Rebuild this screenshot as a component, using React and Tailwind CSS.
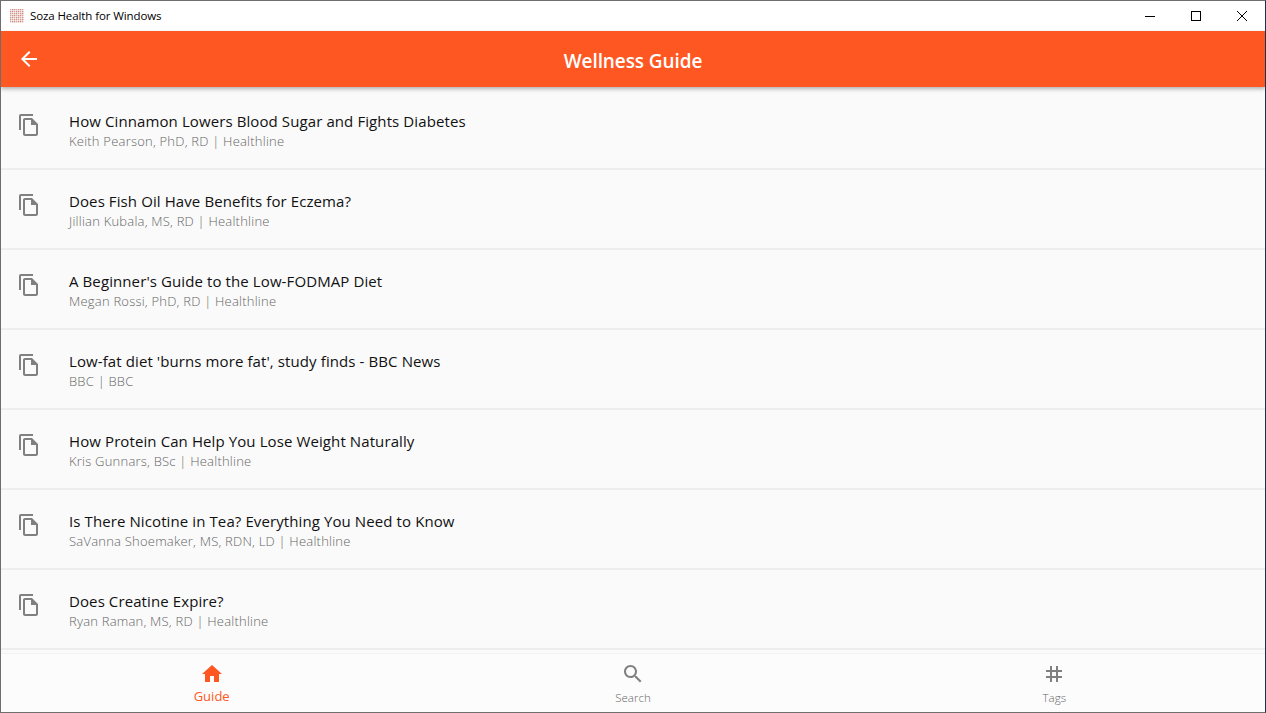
import React from "react";

const font = { fontFamily: '"Open Sans", "Noto Sans", sans-serif' };

const articles = [
  { title: "How Cinnamon Lowers Blood Sugar and Fights Diabetes", by: "Keith Pearson, PhD, RD | Healthline" },
  { title: "Does Fish Oil Have Benefits for Eczema?", by: "Jillian Kubala, MS, RD | Healthline" },
  { title: "A Beginner's Guide to the Low-FODMAP Diet", by: "Megan Rossi, PhD, RD | Healthline" },
  { title: "Low-fat diet 'burns more fat', study finds - BBC News", by: "BBC | BBC" },
  { title: "How Protein Can Help You Lose Weight Naturally", by: "Kris Gunnars, BSc | Healthline" },
  { title: "Is There Nicotine in Tea? Everything You Need to Know", by: "SaVanna Shoemaker, MS, RDN, LD | Healthline" },
  { title: "Does Creatine Expire?", by: "Ryan Raman, MS, RD | Healthline" },
];

const Icon = ({ d, className }) => (
  <svg viewBox="0 0 24 24" fill="currentColor" className={className}>
    <path d={d} />
  </svg>
);

const icons = {
  back: "M20 11H7.83l5.59-5.59L12 4l-8 8 8 8 1.41-1.41L7.83 13H20v-2z",
  copy: "M16 1H4c-1.1 0-2 .9-2 2v14h2V3h12V1zm-1 4H8c-1.1 0-1.99.9-1.99 2L6 21c0 1.1.89 2 1.99 2H19c1.1 0 2-.9 2-2V11l-6-6zM8 21V7h6v5h5v9H8z",
  home: "M10 20v-6h4v6h5v-8h3L12 3 2 12h3v8z",
  search: "M15.5 14h-.79l-.28-.27C15.41 12.59 16 11.11 16 9.5 16 5.91 13.09 3 9.5 3S3 5.91 3 9.5 5.91 16 9.5 16c1.61 0 3.09-.59 4.23-1.57l.27.28v.79l5 4.99L20.49 19l-4.99-5zm-6 0C7.01 14 5 11.99 5 9.5S7.01 5 9.5 5 14 7.01 14 9.5 11.99 14 9.5 14z",
  tag: "M20 10V8h-4V4h-2v4h-4V4H8v4H4v2h4v4H4v2h4v4h2v-4h4v4h2v-4h4v-2h-4v-4h4zm-6 4h-4v-4h4v4z",
};

const AppLogo = () => {
  const cells = [];
  for (let y = 0; y < 7; y++) {
    for (let x = 0; x < 7; x++) {
      cells.push(
        <rect key={`${x}-${y}`} x={x * 2} y={y * 2} width="1.4" height="1.4" fill={(x + y) % 3 === 0 ? "#e9a093" : "#c58f86"} />
      );
    }
  }
  return (
    <svg viewBox="0 0 14 14" className="w-[14px] h-[14px] shrink-0">
      {cells}
    </svg>
  );
};

const NavItem = ({ icon, label, active }) => (
  <div className={`flex-1 flex flex-col items-center ${active ? "text-[#ff5722]" : "text-[#808080]"}`}>
    <Icon d={icon} className="w-6 h-6" />
    <span className={active ? "text-[13px] leading-[18px] mt-[1px]" : "text-[11.5px] font-light leading-[16px] mt-[4px] text-[#666666]"}>{label}</span>
  </div>
);

export default function App() {
  return (
    <div style={font} className="relative w-[1266px] h-[713px] overflow-hidden flex flex-col bg-[#fafafa] border border-[#6e6e6e] border-r-[#1f2f4f]">
      {/* desktop showing through the frame edges */}
      <div className="absolute -top-px left-[1230px] right-0 h-px bg-[#1e3a6e]" />
      <div className="absolute -bottom-px left-[1069px] right-0 h-px bg-[#222222]" />

      <div className="h-[30px] bg-white shrink-0 flex items-center">
        <div className="pl-[9px] pr-[6px]">
          <AppLogo />
        </div>
        <span className="text-[11.5px] tracking-[-0.1px] text-black">Soza Health for Windows</span>
        <div className="ml-auto flex items-center h-full">
          <div className="w-[46px] h-full flex items-center justify-center">
            <div className="w-[10px] h-px bg-black" />
          </div>
          <div className="w-[46px] h-full flex items-center justify-center">
            <div className="w-[10px] h-[10px] border border-black" />
          </div>
          <div className="w-[46px] h-full flex items-center justify-center">
            <svg viewBox="0 0 10 10" className="w-[10px] h-[10px]" stroke="black" strokeWidth="1">
              <path d="M0 0L10 10M10 0L0 10" />
            </svg>
          </div>
        </div>
      </div>

      <header className="relative z-10 h-[56px] shrink-0 bg-[#ff5722] text-white flex items-center justify-center shadow-[0_2px_4px_rgba(0,0,0,0.3)]">
        <Icon d={icons.back} className="absolute left-[16px] top-[16px] w-6 h-6" />
        <h1 className="text-[19px] tracking-[-0.1px] font-semibold mt-[4px]">Wellness Guide</h1>
      </header>

      <div className="flex-1 overflow-hidden flex flex-col pt-[3px]">
        {articles.map((a) => (
          <div key={a.title} className="h-[80px] shrink-0 flex border-b-2 border-[#eeeeee]">
            <Icon d={icons.copy} className="w-6 h-6 ml-[16px] mt-[23px] text-[#808080] shrink-0" />
            <div className="ml-[28px] pt-[21px]">
              <div className="text-[15px] leading-[20px] tracking-[0.1px] text-[#111111]">{a.title}</div>
              <div className="text-[13px] font-light leading-[20px] tracking-[0.22px] text-[#666666]">{a.by}</div>
            </div>
          </div>
        ))}
      </div>

      <nav className="h-[59px] shrink-0 bg-[#fcfcfc] border-t border-[#f3f3f3] flex pt-[8px]">
        <NavItem icon={icons.home} label="Guide" active />
        <NavItem icon={icons.search} label="Search" />
        <NavItem icon={icons.tag} label="Tags" />
      </nav>
    </div>
  );
}
